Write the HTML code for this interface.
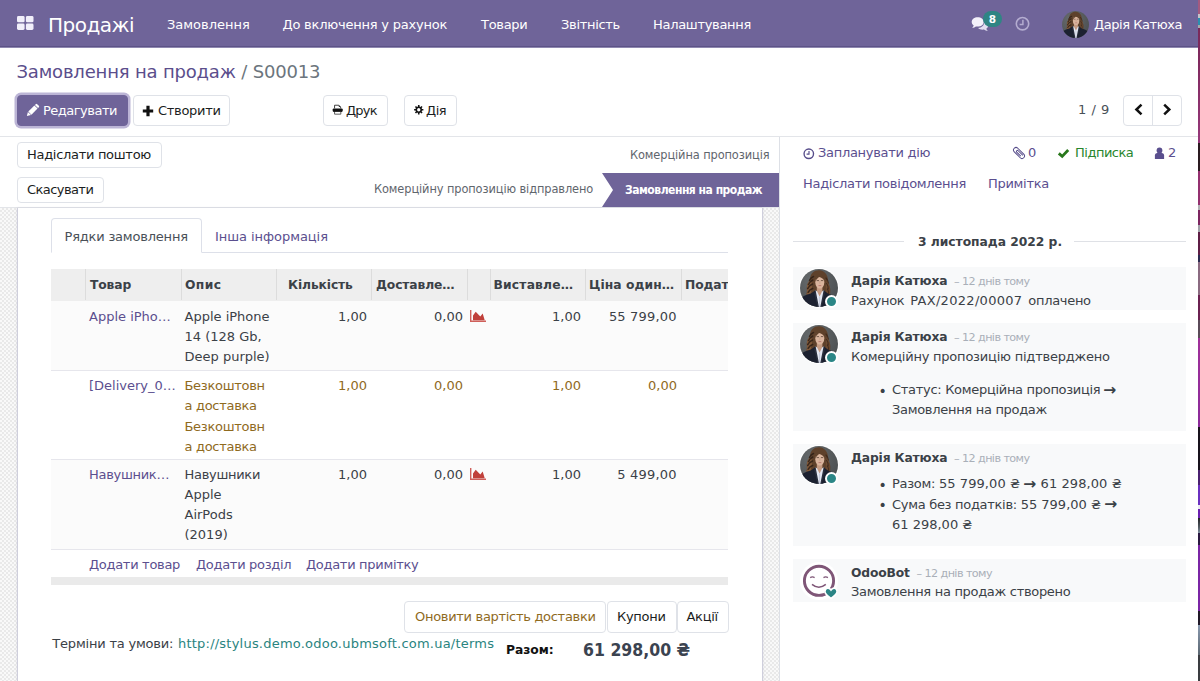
<!DOCTYPE html>
<html lang="uk">
<head>
<meta charset="utf-8">
<title>Odoo - S00013</title>
<style>
*{box-sizing:border-box;margin:0;padding:0}
html,body{width:1200px;height:681px;overflow:hidden;background:#fff}
body{font-family:"DejaVu Sans","Liberation Sans",sans-serif;font-size:13px;line-height:20px;color:#3b4147;position:relative;letter-spacing:-0.3px}
.abs,.t{position:absolute;white-space:nowrap}
.l{letter-spacing:0}
b{font-weight:700}
/* navbar */
#nav{z-index:5;position:absolute;left:0;top:0;width:1198px;height:48px;background:#6f6499;border-bottom:1px solid #8f88b0;box-shadow:inset 0 -1px 0 #5d5387}
#nav .it{position:absolute;top:15px;color:#fff;font-size:13px;line-height:20px;white-space:nowrap}
#brand{position:absolute;left:48px;top:11px;color:#fff;font-size:20px;line-height:28px;white-space:nowrap;letter-spacing:-0.5px}
/* control panel */
#cp{position:absolute;left:0;top:46px;width:1198px;height:91px;background:#fff;border-bottom:1px solid #e3e5e9}
.btn{position:absolute;border:1px solid #dfe2e8;border-radius:4px;background:#fff;color:#1b1e22;font-size:13px;white-space:nowrap}
.btn .t{top:0}
.btn-p{background:#6f6499;border-color:#6f6499;color:#fff;box-shadow:0 0 0 2.5px #bcb5d6}
/* wallpaper strip */
#strip{position:absolute;left:1198.400px;top:0;width:1.600px;height:681px;z-index:9;background:linear-gradient(#a35a80 0px,#a35a80 14px,#c4c4c8 14px,#c4c4c8 18px,#2a8fb0 18px,#2a8fb0 25px,#a8a8ac 25px,#a8a8ac 28px,#7a2a5a 28px,#80295e 60px,#96387a 143px,#2a1a20 143px,#2a1a20 171px,#93306f 171px,#93306f 205px,#b0b0b4 205px,#b0b0b4 210px,#7c2560 210px,#7c2560 225px,#a0a0a8 225px,#a0a0a8 232px,#5e1d45 232px,#5e1d45 255px,#2a2a50 255px,#2a2a50 262px,#8a6a80 262px,#8a6a80 295px,#6a2050 295px,#6a2050 320px,#5a4a58 320px,#5a4a58 338px,#a0309a 338px,#8a2a9a 427px,#18121c 427px,#18121c 470px,#4a2070 470px,#4a2070 485px,#6a30c0 485px,#6a30c0 505px,#e8e8f0 505px,#e8e8f0 509px,#6a20b0 509px,#6a20b0 518px,#202024 518px,#505860 527px,#8090a0 533px,#2a1840 533px,#2a1840 545px,#7a25a5 545px,#7a25a5 611px,#201828 611px,#201828 625px,#8a9ab0 625px,#5a6670 655px,#3a3c40 655px,#3a3c40 681px)}
/* form side */
#sb{position:absolute;left:0;top:137px;width:780px;height:71px;background:#fff;border-bottom:1px solid #e3e5e9}
#bg{position:absolute;left:0;top:208px;width:780px;height:473px;background:repeating-conic-gradient(#e9e9e9 0% 25%,#f9f9f9 0% 50%) 0 0/4px 4px}
#sheet{position:absolute;left:17px;top:208px;width:746px;height:473px;background:#fff;border-left:1px solid #cfcfdc;border-right:1px solid #cfcfdc;box-shadow:0 0 2px rgba(80,80,120,.18)}
#vsep{position:absolute;left:779px;top:137px;width:1px;height:544px;background:#dde0e6}
/* table */
#th{overflow:hidden;position:absolute;left:51px;top:269px;width:677px;height:32px;background:#eeeeee}
#th .t{top:6px;font-weight:700;font-size:12.300px;color:#3b4147;letter-spacing:-0.12px}
#th i{position:absolute;top:0;width:1px;height:31px;background:#dcdcdc}
.row{position:absolute;left:51px;width:677px;border-bottom:1px solid #e6e6ec}
.pur{color:#5b4f8f}
.brn{color:#8f6a1e}
.tl{color:#2a8480}
/* chatter */
.msg{position:absolute;left:793px;width:393px;background:#f8f9fa}
.au{font-weight:700;font-size:12.300px;color:#3b4147;letter-spacing:-0.15px}
.ts{font-size:11.2px;color:#a9afb8;letter-spacing:-0.58px}
.ar{font-size:15.500px;line-height:10px;font-weight:700;letter-spacing:0;position:relative;top:0.5px;margin-left:-1px}
.dot{position:absolute;width:13px;height:13px;border-radius:50%;background:#2b8686;border:2px solid #fff}
</style>
</head>
<body>
<svg width="0" height="0" style="position:absolute">
<defs>
<clipPath id="avc"><circle cx="19" cy="19" r="19"/></clipPath>
<radialGradient id="avbg" cx="35%" cy="30%" r="80%"><stop offset="0" stop-color="#686c6e"/><stop offset="1" stop-color="#4a4e50"/></radialGradient>
<symbol id="av" viewBox="0 0 38 38">
 <g clip-path="url(#avc)">
  <rect width="38" height="38" fill="url(#avbg)"/>
  <!-- hair back -->
  <path d="M19.5 1.2c-5.2-.4-8.6 3-9.300 7.500-.5 3.300-2.600 5-3.200 8.300-.6 3.200.8 5.400-.8 8.500 2.600 1.300 6.800.8 9.200-1.400l4.600-3.100 4.800 3.300c1.500 2.600 3.800 3.700 5.900 3.100-1.400-2.800.4-5.400-.6-8.400-.9-2.900-2.100-4.600-2.100-7.800 0-5.200-3.300-9.600-8.500-10z" fill="#5e412b"/>
  <path d="M10.500 9.500c-1.600 3.500-3.800 5.500-3.700 9.300.1 2.600.4 4.400-.4 6.500 1.800.4 3.600-.1 5.100-1.100-1.100-2.600.5-4.400.4-7.200-.1-2.900-.6-5.100-1.400-7.500z" fill="#80593a"/>
  <path d="M27.600 10.200c.2 3.400 1.700 5.300 2.100 8.300.4 2.700-.6 4.600.2 7.400-1.500.2-2.800-.4-3.900-1.500.9-2.700-.3-4.600-.2-7.500.1-2.600 1-4.500 1.800-6.700z" fill="#6f4c32"/>
  <path d="M13.500 7.500q-3 1.200-4 4M12.800 11q-3.200 1.500-4.300 4.500M12.500 15q-3.500 1.400-4.800 4.600M12.700 19.500q-3 1-4.600 3.800" fill="none" stroke="#2e1f15" stroke-width="1.500" stroke-linecap="round" opacity=".85"/>
  <path d="M26 9q2 2.200 2.300 5M26.600 14.500q1.900 2.400 1.600 5.500M27.300 20q1.500 2 1.200 4.300" fill="none" stroke="#38261a" stroke-width="1.200" stroke-linecap="round" opacity=".8"/>
  <!-- neck -->
  <path d="M16.800 18h5.600v7.500l-2.800 3.500-2.800-3.500z" fill="#c49a82"/>
  <!-- face -->
  <ellipse cx="19.800" cy="13.200" rx="4.500" ry="6.400" fill="#d9b49d"/>
  <path d="M15.300 12.500c.3-4.500 2-7 4.800-7.100 2.600-.1 4.300 2.400 4.300 6.200-1.400-1.900-3.100-3.400-5.100-3.600-1.700 1-3 2.500-4 4.500z" fill="#5e412b"/>
  <path d="M16.600 11.600h2.400M20.900 11.600h2.400" stroke="#5a4336" stroke-width=".8"/>
  <path d="M18.500 16.600h2.800" stroke="#b9766f" stroke-width=".9"/>
  <path d="M19.900 12.200v2.600" stroke="#c39c86" stroke-width=".7"/>
  <!-- suit -->
  <path d="M-1 38V30.500c2.400-3 7.700-4.700 11.300-5.800l5.300-3.500 4 16.800zM39 38V31c-2.500-3.200-6.900-4.800-10.400-6l-5-3.700-4 16.700z" fill="#1c2130"/>
  <!-- shirt -->
  <path d="M15.600 21.200l1.500 1.300 2.500 5 2.500-5 1.500-1.200 1.100 3.200-3.300 13.500h-3.800l-3.200-13.600z" fill="#e3e7f2"/>
  <path d="M15.600 21.200l-2.700 3 3.700 13.800h2.300zM23.600 21.300l2.700 3-3.800 13.700h-2.200z" fill="#1c2130" opacity=".93"/>
  <path d="M19.600 27.500v10.500" stroke="#aeb6cc" stroke-width=".6"/>
 </g>
</symbol>
</defs>
</svg>
<div id="nav">
  <svg class="abs" style="left:17px;top:16px" width="17" height="14" viewBox="0 0 17 14"><g fill="#f1effa"><rect x="0" y="0" width="7.6" height="6.3" rx="1.4"/><rect x="8.9" y="0" width="7.6" height="6.3" rx="1.4"/><rect x="0" y="7.6" width="7.6" height="6.3" rx="1.4"/><rect x="8.9" y="7.6" width="7.6" height="6.3" rx="1.4"/></g></svg>
  <div id="brand">Продажі</div>
  <div class="it" style="left:167px;letter-spacing:0">Замовлення</div>
  <div class="it" style="left:282.5px;letter-spacing:-0.22px">До включення у рахунок</div>
  <div class="it" style="left:481px">Товари</div>
  <div class="it" style="left:561px">Звітність</div>
  <div class="it" style="left:653px">Налаштування</div>

  <svg class="abs" style="left:970.700px;top:15.900px" width="19" height="16" viewBox="0 0 19 16">
    <path d="M13.200 5.600c2.400.5 4.100 2.100 4.100 4 0 1.300-.8 2.400-2 3.200.3.900.9 1.700 1.600 2.300-1.500-.1-2.900-.600-3.900-1.500-.5.100-1 .1-1.500.1-1.800 0-3.400-.6-4.400-1.600 3.700-.3 6.400-2.700 6.100-6.500z" fill="#e3dff2"/>
    <path d="M6.700 1.200c3.300 0 6 2.100 6 4.700s-2.700 4.700-6 4.700c-.6 0-1.200-.1-1.800-.2-1 .9-2.300 1.400-3.700 1.500.7-.7 1.200-1.500 1.500-2.400C1.500 8.600.7 7.300.7 5.900c0-2.600 2.700-4.700 6-4.700z" fill="#f3f1fa"/>
  </svg>
  <div class="abs l" style="left:983px;top:11px;width:19px;height:16px;border-radius:8px;background:#2f8584;color:#fff;font-weight:700;font-size:10.5px;line-height:16px;text-align:center">8</div>
  <svg class="abs" style="left:1015px;top:16px" width="15" height="15" viewBox="0 0 15 15"><circle cx="7.500" cy="7.700" r="6.200" fill="none" stroke="#b4acd0" stroke-width="1.600"/><path d="M7.900 3.800v4.600H4.600" fill="none" stroke="#b4acd0" stroke-width="1.500"/></svg>
  <svg class="abs" style="left:1061.500px;top:10.500px" width="27" height="27"><use href="#av"/></svg>
  <div class="it" style="left:1094px;letter-spacing:-0.45px">Дарія Катюха</div>
</div>
<div id="cp">
  <div class="t" style="left:16.5px;top:14px;font-size:18px;line-height:24px;color:#6c757d;letter-spacing:-0.18px"><span style="color:#5b4e8c">Замовлення на продаж</span> / S00013</div>
  <div class="btn btn-p" style="left:17px;top:49px;width:111px;height:31px"><svg class="abs" style="left:5.200px;top:5.400px" width="19" height="19" viewBox="-3 -3 19 19"><g transform="rotate(45 6.500 6.500)" fill="#fff"><path d="M4.300 .9V-.3q0-1 1-1h2.400q1 0 1 1V.9z"/><rect x="4.300" y="1.600" width="4.400" height="8.600"/><path d="M4.300 10.800h4.400L6.500 14.400z"/></g></svg><span class="t" style="left:25px;top:5px;letter-spacing:-0.5px">Редагувати</span></div>
  <div class="btn" style="left:133px;top:49px;width:97px;height:31px"><svg class="abs" style="left:8px;top:9px" width="12" height="12" viewBox="0 0 12 12"><path d="M4.400 .8h3.200v3.600h3.600v3.200H7.600v3.600H4.400V7.600H.8V4.400h3.600z" fill="#111"/></svg><span class="t" style="left:24px;top:5px">Створити</span></div>
  <div class="btn" style="left:323px;top:49px;width:65px;height:31px"><svg class="abs" style="left:8.300px;top:7.800px" width="11.400" height="11.400" viewBox="0 0 12 12"><path d="M2.700 4.600V1.300h4.500l1.900 1.900v1.400" fill="none" stroke="#222" stroke-width=".9"/><path d="M7.200 1.300v1.900h1.900z" fill="#222"/><rect x=".7" y="4.700" width="10.600" height="3.600" rx="1.200" fill="#111"/><path d="M2.700 8.300v2.400h6.600V8.300" fill="#fff" stroke="#444" stroke-width=".9"/></svg><span class="t" style="left:22px;top:5px;letter-spacing:-0.8px">Друк</span></div>
  <div class="btn" style="left:404px;top:49px;width:53px;height:31px"><svg class="abs" style="left:7.850px;top:7.950px" width="11.500" height="11.500" viewBox="0 0 12 12"><path d="M5.16 1.17 L6.84 1.17 L6.82 2.60 L7.83 3.02 L8.82 1.99 L10.01 3.18 L8.98 4.17 L9.40 5.18 L10.83 5.16 L10.83 6.84 L9.40 6.82 L8.98 7.83 L10.01 8.82 L8.82 10.01 L7.83 8.98 L6.82 9.40 L6.84 10.83 L5.16 10.83 L5.18 9.40 L4.17 8.98 L3.18 10.01 L1.99 8.82 L3.02 7.83 L2.60 6.82 L1.17 6.84 L1.17 5.16 L2.60 5.18 L3.02 4.17 L1.99 3.18 L3.18 1.99 L4.17 3.02 L5.18 2.60Z M4.25 6.00a1.75 1.75 0 1 0 3.5 0a1.75 1.75 0 1 0 -3.5 0Z" fill="#111" fill-rule="evenodd"/></svg><span class="t" style="left:21px;top:5px;letter-spacing:-0.5px">Дія</span></div>
  <div class="t" style="left:1078px;top:54px;color:#495057;letter-spacing:0.5px">1 / 9</div>
  <div class="btn" style="left:1123px;top:49px;width:59px;height:31px"><i style="position:absolute;left:28px;top:0;width:1px;height:29px;background:#dfe2e8"></i><svg class="abs" style="left:8.500px;top:7px" width="12" height="13" viewBox="0 0 12 13"><path d="M8.500 1.600L3.400 6.500l5.100 4.900" fill="none" stroke="#111" stroke-width="2.500"/></svg><svg class="abs" style="left:37px;top:7px" width="12" height="13" viewBox="0 0 12 13"><path d="M3.200 1.600l5.100 4.900-5.100 4.900" fill="none" stroke="#111" stroke-width="2.500"/></svg></div>
</div>
<div id="strip"></div>

<div id="sb">
  <div class="btn" style="left:17px;top:5px;width:145px;height:26px"><span class="t" style="left:9px;top:2px">Надіслати поштою</span></div>
  <div class="btn" style="left:17px;top:39.500px;width:87px;height:26px"><span class="t" style="left:9px;top:2px;letter-spacing:-0.57px">Скасувати</span></div>
  <div class="t" style="left:630px;top:8px;font-size:11.4px;color:#5f666d;letter-spacing:-0.1px">Комерційна пропозиція</div>
  <div class="t" style="left:374px;top:42px;font-size:11.4px;color:#5f666d;letter-spacing:-0.1px">Комерційну пропозицію відправлено</div>
  <svg class="abs" style="left:602px;top:36px" width="177" height="34" viewBox="0 0 177 34"><path d="M0 0H177V34H0L11 17Z" fill="#6f6499"/></svg>
  <div class="t" style="left:625px;top:43px;font-family:'DejaVu Sans Condensed','DejaVu Sans',sans-serif;font-size:12px;color:#fff;font-weight:700;letter-spacing:-0.48px">Замовлення на продаж</div>
</div>
<div id="bg"></div>
<div id="sheet"></div>
<div id="vsep"></div>

<!-- tabs -->
<div style="position:absolute;left:51px;top:252px;width:677px;height:1px;background:#dde0e9"></div>
<div style="position:absolute;left:51px;top:218px;width:151px;height:35px;border:1px solid #dde0e9;border-bottom:1px solid #fff;border-radius:4px 4px 0 0;background:#fff"></div>
<div class="t" style="left:64.500px;top:227px;color:#495057;letter-spacing:-0.2px">Рядки замовлення</div>
<div class="t pur" style="left:215px;top:227px;letter-spacing:-0.06px">Інша інформація</div>

<!-- table -->
<div id="th">
  <i style="left:34px"></i><i style="left:130px"></i><i style="left:225px"></i><i style="left:320px"></i><i style="left:416px"></i><i style="left:439px"></i><i style="left:534px"></i><i style="left:630px"></i>
  <span class="t" style="left:39px">Товар</span>
  <span class="t" style="left:134px;letter-spacing:0.4px">Опис</span>
  <span class="t" style="left:237px">Кількість</span>
  <span class="t" style="left:325px">Доставле…</span>
  <span class="t" style="left:442.500px;letter-spacing:0.18px">Виставле…</span>
  <span class="t" style="left:538px;letter-spacing:0.06px">Ціна один…</span>
  <span class="t" style="left:634px">Подат</span>
</div>
<div class="row" style="top:301px;height:70px;background:#fbfbfb"></div>
<div class="row" style="top:371px;height:89px"></div>
<div class="row" style="top:460px;height:90px;background:#fbfbfb"></div>
<div style="position:absolute;left:51px;top:577px;width:677px;height:8px;background:#eaeaea"></div>

<div class="t pur l" style="left:89px;top:307px">Apple iPho…</div>
<div class="t l" style="left:184.500px;top:307px">Apple iPhone</div>
<div class="t l" style="left:184.500px;top:327px">14 (128 Gb,</div>
<div class="t l" style="left:184.500px;top:347px">Deep purple)</div>
<div class="t l" style="right:833px;top:307px">1,00</div>
<div class="t l" style="right:737px;top:307px">0,00</div>
<div class="t l" style="right:619px;top:307px">1,00</div>
<div class="t l" style="right:523.300px;top:307px;letter-spacing:0.18px">55 799,00</div>

<div class="t pur l" style="left:89px;top:376px">[Delivery_0…</div>
<div class="t brn" style="left:184.500px;top:376px">Безкоштовн</div>
<div class="t brn" style="left:184.500px;top:396px">а доставка</div>
<div class="t brn" style="left:184.500px;top:416.5px">Безкоштовн</div>
<div class="t brn" style="left:184.500px;top:436.5px">а доставка</div>
<div class="t l brn" style="right:833px;top:376px">1,00</div>
<div class="t l brn" style="right:737px;top:376px">0,00</div>
<div class="t l brn" style="right:619px;top:376px">1,00</div>
<div class="t l brn" style="right:523px;top:376px">0,00</div>

<div class="t pur" style="left:89px;top:465px">Навушник…</div>
<div class="t" style="left:184.500px;top:465px">Навушники</div>
<div class="t l" style="left:184.500px;top:485px">Apple</div>
<div class="t l" style="left:184.500px;top:505px">AirPods</div>
<div class="t l" style="left:184.500px;top:525px">(2019)</div>
<div class="t l" style="right:833px;top:465px">1,00</div>
<div class="t l" style="right:737px;top:465px">0,00</div>
<div class="t l" style="right:619px;top:465px">1,00</div>
<div class="t l" style="right:523.300px;top:465px;letter-spacing:0.18px">5 499,00</div>

<svg class="abs" style="left:469px;top:310px" width="18" height="13" viewBox="0 0 18 13"><path d="M1.700 0v11.300H17" fill="none" stroke="#cf5f5a" stroke-width="1.400"/><path d="M4 10.200V5.500L6.700 1.800l4.600 4.600 2.400-2.800 2 6.600z" fill="#c0403a"/></svg><svg class="abs" style="left:469px;top:468px" width="18" height="13" viewBox="0 0 18 13"><path d="M1.700 0v11.300H17" fill="none" stroke="#cf5f5a" stroke-width="1.400"/><path d="M4 10.200V5.500L6.700 1.800l4.600 4.600 2.400-2.800 2 6.600z" fill="#c0403a"/></svg>
<div class="t pur" style="left:89px;top:555px">Додати товар</div>
<div class="t pur" style="left:196px;top:555px">Додати розділ</div>
<div class="t pur" style="left:306px;top:555px">Додати примітку</div>

<div class="btn" style="left:404px;top:601px;width:202px;height:32px"><span class="t brn" style="left:10px;top:5px">Оновити вартість доставки</span></div>
<div class="btn" style="left:607px;top:601px;width:70px;height:32px"><span class="t" style="left:9px;top:5px">Купони</span></div>
<div class="btn" style="left:677px;top:601px;width:52px;height:32px"><span class="t" style="left:8.500px;top:5px">Акції</span></div>

<div class="t" style="left:52.300px;top:634px;letter-spacing:-0.2px">Терміни та умови:</div>
<div class="t tl" style="left:178px;top:634px;letter-spacing:0.22px">http://stylus.demo.odoo.ubmsoft.com.ua/terms</div>
<div class="t" style="left:506px;top:640px;font-weight:700;font-size:12.300px;color:#111;letter-spacing:-0.05px">Разом:</div>
<div class="t" style="left:583px;top:638px;font-family:'DejaVu Sans Condensed','DejaVu Sans',sans-serif;font-weight:700;font-size:17.5px;line-height:24px;color:#3b4350;letter-spacing:0">61 298,00 ₴</div>

<!-- chatter -->

<svg class="abs" style="left:803px;top:148.200px" width="11.600" height="11.600" viewBox="0 0 11 11"><circle cx="5.500" cy="5.500" r="4.500" fill="none" stroke="#564c8a" stroke-width="1.300"/><path d="M5.700 2.800v3H3.400" fill="none" stroke="#564c8a" stroke-width="1.100"/></svg>
<svg class="abs" style="left:1012px;top:146px" width="14" height="14" viewBox="0 0 14 14"><g transform="rotate(-45 7 7)" fill="none" stroke="#564c8a" stroke-width="1"><rect x="4.500" y=".3" width="5" height="13.400" rx="2.500"/><path d="M6 10.500V4.800a1 1 0 0 1 2 0v6.700"/></g></svg>
<svg class="abs" style="left:1057px;top:148px" width="13" height="11" viewBox="0 0 13 11"><path d="M1.800 5.400l3.400 3 6-6.400" fill="none" stroke="#28771b" stroke-width="2.800"/></svg>
<svg class="abs" style="left:1154px;top:147px" width="11" height="13" viewBox="0 0 11 13"><circle cx="5.500" cy="3.400" r="2.900" fill="#5a4f8e"/><path d="M.9 12.100V8.600q0-2.500 2.500-2.500h4.200q2.500 0 2.500 2.500v3.500z" fill="#5a4f8e"/></svg>
<div class="t pur" style="left:818px;top:143px">Запланувати дію</div>
<div class="t pur l" style="left:1028px;top:143px">0</div>
<div class="t" style="left:1075px;top:143px;color:#28862e;letter-spacing:-0.5px">Підписка</div>
<div class="t pur l" style="left:1168px;top:143px">2</div>
<div class="t pur" style="left:803px;top:174px">Надіслати повідомлення</div>
<div class="t pur" style="left:988px;top:174px">Примітка</div>

<div style="position:absolute;left:793px;top:241px;width:111px;height:1px;background:#dfe1e6"></div>
<div style="position:absolute;left:1074px;top:241px;width:112px;height:1px;background:#dfe1e6"></div>
<div class="t" style="left:918px;top:232px;font-weight:700;font-size:12.300px;letter-spacing:-0.03px">3 листопада 2022 р.</div>

<div class="msg" style="top:267px;height:43px"></div>
<div class="msg" style="top:323px;height:108px"></div>
<div class="msg" style="top:444px;height:102px"></div>
<div class="msg" style="top:559px;height:43px"></div>

<div class="abs" style="left:799px;top:268px;width:40px;height:40px;border-radius:50%;background:#fff"></div><svg class="abs" style="left:800px;top:269px" width="38" height="38"><use href="#av"/></svg><div class="dot" style="left:824.500px;top:294.5px"></div><div class="abs" style="left:799px;top:324px;width:40px;height:40px;border-radius:50%;background:#fff"></div><svg class="abs" style="left:800px;top:325px" width="38" height="38"><use href="#av"/></svg><div class="dot" style="left:824.500px;top:350.5px"></div><div class="abs" style="left:799px;top:445px;width:40px;height:40px;border-radius:50%;background:#fff"></div><svg class="abs" style="left:800px;top:446px" width="38" height="38"><use href="#av"/></svg><div class="dot" style="left:824.500px;top:471.5px"></div><div class="abs" style="left:800px;top:562px;width:38px;height:38px;border-radius:50%;background:#fff"></div>
<svg class="abs" style="left:799px;top:561px" width="40" height="40" viewBox="0 0 40 40"><circle cx="20" cy="19.800" r="14.600" fill="none" stroke="#7f5677" stroke-width="2.900"/><path d="M11.200 16.600q2.200-1.500 4.400 0M24.500 16.600q2.200-1.500 4.400 0" fill="none" stroke="#7f5677" stroke-width="1.300"/><path d="M13 23.400q6.800 5.600 13.800 0" fill="none" stroke="#7f5677" stroke-width="1.500"/><path d="M32 37.500c-6-4.500-7-6.500-5.500-9 1.300-2 4-1.800 5.500.5 1.500-2.300 4.200-2.500 5.500-.5 1.500 2.500.5 4.500-5.500 9z" fill="#2b8585" stroke="#fff" stroke-width="1.600"/></svg>
<div class="t au" style="left:851px;top:271px">Дарія Катюха <span class="ts" style="font-weight:400;margin-left:2.500px">– 12 днів тому</span></div>
<div class="t" style="left:851px;top:291px;word-spacing:2px">Рахунок <span class="l" style="letter-spacing:0.3px">PAX/2022/00007</span> оплачено</div>

<div class="t au" style="left:851px;top:327px">Дарія Катюха <span class="ts" style="font-weight:400;margin-left:2.500px">– 12 днів тому</span></div>
<div class="t" style="left:851px;top:347px;letter-spacing:-0.22px">Комерційну пропозицію підтверджено</div>
<div class="t" style="left:878.600px;top:380.5px;font-size:14px">•</div>
<div class="t" style="left:892px;top:380px">Статус: Комерційна пропозиція <span class="ar">→</span></div>
<div class="t" style="left:892px;top:399.5px">Замовлення на продаж</div>

<div class="t au" style="left:851px;top:448px">Дарія Катюха <span class="ts" style="font-weight:400;margin-left:2.500px">– 12 днів тому</span></div>
<div class="t" style="left:878.600px;top:474.5px;font-size:14px">•</div>
<div class="t" style="left:892px;top:474px">Разом: <span class="l" style="letter-spacing:0.08px">55 799,00 ₴ <span class="ar">→</span> 61 298,00 ₴</span></div>
<div class="t" style="left:878.600px;top:495px;font-size:14px">•</div>
<div class="t" style="left:892px;top:494.5px">Сума без податків: <span class="l">55 799,00 ₴ <span class="ar">→</span></span></div>
<div class="t l" style="left:892px;top:514.5px">61 298,00 ₴</div>

<div class="t au l" style="left:851px;top:562.5px">OdooBot <span class="ts" style="font-weight:400;margin-left:2.500px">– 12 днів тому</span></div>
<div class="t" style="left:851px;top:582.4px">Замовлення на продаж створено</div>
</body>
</html>
